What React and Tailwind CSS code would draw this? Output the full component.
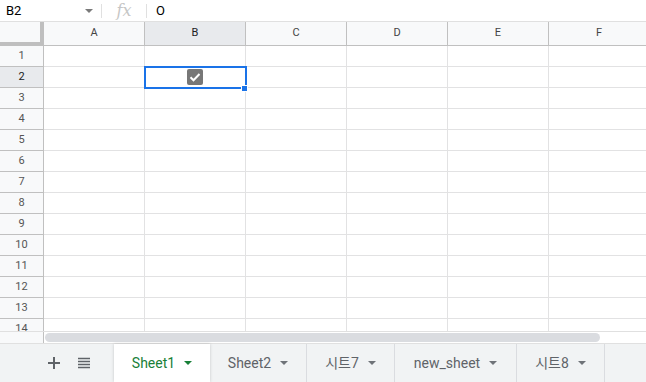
import React from "react";

const cols = ["A", "B", "C", "D", "E", "F"];
const rows = Array.from({ length: 14 }, (_, i) => i + 1);
const tabs = [
  { name: "Sheet1", w: "w-[96px]", active: true },
  { name: "Sheet2", w: "w-[97px]" },
  { name: "시트7", w: "w-[88px]" },
  { name: "new_sheet", w: "w-[122px]" },
  { name: "시트8", w: "w-[88px]" },
];

const Caret = ({ color = "#5f6368" }) => (
  <svg width="8" height="4" viewBox="0 0 8 4" className="shrink-0">
    <path d="M0 0h8L4 4z" fill={color} />
  </svg>
);

const App = () => {
  return (
    <div className="w-[646px] h-[382px] overflow-hidden bg-white font-['Roboto','Liberation_Sans','Noto_Sans_CJK_KR',sans-serif] text-[#222]">
      {/* formula bar */}
      <div className="h-[22px] flex items-center border-b border-[#e0e0e0]">
        <div className="w-[101px] flex items-center justify-between pl-[6px] pr-[8px] text-[13px] text-black">
          <span>B2</span>
          <Caret color="#7a7a7a" />
        </div>
        <div className="h-[14px] w-px bg-[#e0e0e0]" />
        <div className="w-[44px] h-[20px] flex items-center justify-center font-['DejaVu_Serif',serif] italic text-[16px] leading-[20px] text-[#c6c6c6]">
          fx
        </div>
        <div className="h-[14px] w-px bg-[#e0e0e0]" />
        <div className="pl-[9px] text-[13px] text-black">O</div>
      </div>

      {/* grid */}
      <div className="relative h-[309px] overflow-hidden">
        <div className="flex h-[24px]">
          <div className="w-[44px] shrink-0 bg-[#f8f9fa] border-r-4 border-b-4 border-[#bfbfbf]" />
          {cols.map((c) => (
            <div
              key={c}
              className={`w-[101px] shrink-0 flex items-center justify-center border-r border-b border-[#c0c0c0] text-[11px] ${
                c === "B" ? "bg-[#e8eaed] text-[#202124]" : "bg-[#f8f9fa] text-[#444]"
              }`}
            >
              {c}
            </div>
          ))}
        </div>
        {rows.map((r) => (
          <div key={r} className="flex h-[21px]">
            <div
              className={`w-[44px] shrink-0 flex items-center justify-center pt-px border-r border-b border-[#c0c0c0] text-[11px] ${
                r === 2 ? "bg-[#e8eaed] text-[#202124]" : "bg-[#f8f9fa] text-[#555]"
              }`}
            >
              {r}
            </div>
            {cols.map((c) => (
              <div
                key={c}
                className="w-[101px] shrink-0 flex items-center justify-center border-r border-b border-[#e2e2e3]"
              >
                {r === 2 && c === "B" && (
                  <div className="w-[16px] h-[16px] rounded-[2px] bg-[#777] flex items-center justify-center">
                    <svg width="12" height="10" viewBox="0 0 12 10">
                      <path d="M1.5 5.2l3 3 6-6.2" fill="none" stroke="#fff" strokeWidth="2" />
                    </svg>
                  </div>
                )}
              </div>
            ))}
          </div>
        ))}
        {/* selection */}
        <div className="absolute left-[144px] top-[44px] w-[103px] h-[23px] border-2 border-[#1a73e8]" />
        <div className="absolute left-[241px] top-[63px] w-[7px] h-[7px] bg-[#1a73e8] border border-white" />
      </div>

      {/* horizontal scroll */}
      <div className="h-[12px] flex border-t border-[#e0e0e0]">
        <div className="w-[44px] shrink-0 bg-[#f8f9fa] border-r border-[#c0c0c0]" />
        <div className="ml-[1px] mt-[1px] w-[555px] h-[9px] rounded-full bg-[#dadce0]" />
      </div>

      {/* sheet tabs */}
      <div className="h-[39px] flex bg-[#f1f3f4] border-t border-[#e0e0e0]">
        <div className="w-[114px] shrink-0 flex items-center pl-[47px] gap-[17px]">
          <svg width="14" height="14" viewBox="0 0 14 14">
            <path d="M7 1v12M1 7h12" stroke="#5f6368" strokeWidth="2" />
          </svg>
          <svg width="12" height="12" viewBox="0 0 12 12">
            <path d="M0 1.5h12M0 4.5h12M0 7.5h12M0 10.5h12" stroke="#5f6368" strokeWidth="1.6" />
          </svg>
        </div>
        {tabs.map((t) => (
          <div
            key={t.name}
            className={`${t.w} shrink-0 flex items-center justify-center gap-[9px] text-[14px] ${
              t.active
                ? "bg-white text-[#188038] shadow-[0_0_3px_rgba(0,0,0,0.18)]"
                : "text-[#5f6368] border-r border-[#dadce0]"
            }`}
          >
            <span>{t.name}</span>
            <Caret color={t.active ? "#188038" : "#6f7378"} />
          </div>
        ))}
      </div>
    </div>
  );
};

export default App;
